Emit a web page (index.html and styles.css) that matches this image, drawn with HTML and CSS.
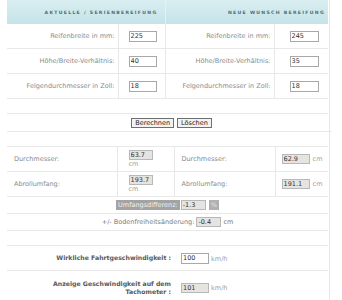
FILE: index.html
```html
<!DOCTYPE html>
<html>
	<head>
		<meta charset="utf-8">
		<title>Reifenrechner</title>
		<link rel="stylesheet" href="styles.css">
	</head>
	<body>
		<div class="wrap">
			<table class="sizes">
				<colgroup>
					<col class="c1"><col class="c2"><col class="c3"><col class="c4">
				</colgroup>
				<tr class="head">
					<th colspan="2" class="h-left">Aktuelle / Serienbereifung</th>
					<th colspan="2" class="h-right">Neue Wunsch Bereifung</th>
				</tr>
				<tr>
					<td class="lbl">Reifenbreite in mm:</td>
					<td class="inp"><input type="text" value="225"></td>
					<td class="lbl">Reifenbreite in mm:</td>
					<td class="inp inp-r"><input type="text" value="245"></td>
				</tr>
				<tr>
					<td class="lbl">Höhe/Breite-Verhältnis:</td>
					<td class="inp"><input type="text" value="40"></td>
					<td class="lbl">Höhe/Breite-Verhältnis:</td>
					<td class="inp inp-r"><input type="text" value="35"></td>
				</tr>
				<tr>
					<td class="lbl">Felgendurchmesser in Zoll:</td>
					<td class="inp"><input type="text" value="18"></td>
					<td class="lbl">Felgendurchmesser in Zoll:</td>
					<td class="inp inp-r"><input type="text" value="18"></td>
				</tr>
			</table>

			<div class="blank"></div>
			<div class="buttons">
				<button type="button">Berechnen</button>
				<button type="button">Löschen</button>
			</div>
			<div class="blank"></div>

			<table class="results">
				<colgroup>
					<col class="r1"><col class="r2"><col class="r3"><col class="r4">
				</colgroup>
				<tr>
					<td class="rl">Durchmesser:</td>
					<td class="ri"><input type="text" class="ro" value="63.7" readonly><span class="below">cm</span></td>
					<td class="rl">Durchmesser:</td>
					<td class="ri ri-r"><input type="text" class="ro" value="62.9" readonly> <span class="unit">cm</span></td>
				</tr>
				<tr>
					<td class="rl">Abrollumfang:</td>
					<td class="ri"><input type="text" class="ro" value="193.7" readonly><span class="below">cm</span></td>
					<td class="rl">Abrollumfang:</td>
					<td class="ri ri-r"><input type="text" class="ro" value="191.1" readonly> <span class="unit">cm</span></td>
				</tr>
			</table>

			<div class="line diff">
				<span class="mark">Umfangsdifferenz:</span><input type="text" class="ro small" value="-1.3" readonly><span class="mark pct">%</span>
			</div>
			<div class="line">
				+/- Bodenfreiheitsänderung: <input type="text" class="ro small" value="-0.4" readonly> <span class="unit">cm</span>
			</div>
			<div class="blank"></div>

			<table class="speed">
				<tr>
					<td class="sl">Wirkliche Fahrtgeschwindigkeit :</td>
					<td class="si"><input type="text" value="100"> <span class="unit">km/h</span></td>
				</tr>
				<tr class="tall">
					<td class="sl">Anzeige Geschwindigkeit auf dem<br>Tachometer :</td>
					<td class="si"><input type="text" class="ro" value="101" readonly> <span class="unit">km/h</span></td>
				</tr>
			</table>
		</div>
	</body>
</html>
```
FILE: styles.css
```css
body{
	margin: 0;
	background: #fff;
	font-family: "DejaVu Sans", Verdana, sans-serif;
	font-size: 6.5px;
	color: #8a8a8a;
}
.wrap{
	margin-left: 7px;
	width: 322px;
	min-height: 300px;
	border-right: 1px solid #e8e8e8;
}
table{
	border-collapse: collapse;
	table-layout: fixed;
	width: 321px;
}
td{
	padding: 0;
	border-bottom: 1px solid #e8e8e8;
}
input{
	box-sizing: border-box;
	width: 28px;
	height: 11px;
	padding: 0 1px;
	margin: 0;
	border: 1px solid #a8a8a8;
	font-family: "DejaVu Sans", Verdana, sans-serif;
	font-size: 6.5px;
	color: #333;
	background: #fff;
	vertical-align: middle;
}
input.ro{
	background: #e6e4e0;
	border-color: #b8b8b8;
	height: 10px;
}
.unit{
	vertical-align: middle;
}

/* kopf */
.sizes .c1{ width: 111px; }
.sizes .c2{ width: 47px; }
.sizes .c3{ width: 109px; }
.sizes .c4{ width: 54px; }
.head th{
	height: 24px;
	padding: 0;
	background: linear-gradient(#d9eef1, #c4e3e8);
	color: #4f6c72;
	font-size: 4.6px;
	font-weight: bold;
	letter-spacing: 1.3px;
	text-transform: uppercase;
	text-align: right;
}
.head .h-left{
	padding-right: 7px;
	border-right: 1px solid #e4f1f3;
}
.head .h-right{
	padding-right: 3px;
}
.sizes td{
	height: 24px;
}
.sizes .lbl{
	text-align: right;
	padding-right: 3px;
	border-right: 1px solid #e8e8e8;
}
.sizes .inp{
	padding-left: 10px;
	border-right: 1px solid #e8e8e8;
}
.sizes .inp-r{
	padding-left: 15px;
	border-right: 0;
}
.sizes .inp-r input{
	width: 29px;
}

.blank{
	height: 14px;
	width: 321px;
	border-bottom: 1px solid #e8e8e8;
}
.buttons{
	width: 321px;
	height: 17px;
	border-bottom: 1px solid #e8e8e8;
	display: flex;
	justify-content: center;
	align-items: center;
	gap: 3px;
	padding-left: 4px;
	box-sizing: content-box;
}
.buttons button{
	height: 10px;
	padding: 0 3px;
	font-family: "DejaVu Sans", Verdana, sans-serif;
	font-size: 6.5px;
	color: #222;
	background: #f2f2f2;
	border: 1px solid #707070;
	line-height: 8px;
}

/* ergebnisse */
.results .r1{ width: 110px; }
.results .r2{ width: 57px; }
.results .r3{ width: 101px; }
.results .r4{ width: 53px; }
.results td{
	height: 24px;
}
.results .rl{
	padding-left: 7px;
	border-right: 1px solid #e8e8e8;
}
.results .ri{
	padding-left: 11px;
	border-right: 1px solid #e8e8e8;
}
.results .ri input{
	width: 24px;
	display: block;
}
.results .ri .below{
	display: block;
	line-height: 8px;
	color: #a0a0a0;
}
.results .ri-r{
	padding-left: 6px;
	border-right: 0;
}
.results .ri-r input{
	width: 28px;
	display: inline-block;
}
.results .ri-r .unit{
	color: #a0a0a0;
	margin-left: 1px;
}

.line{
	width: 321px;
	height: 16px;
	border-bottom: 1px solid #e8e8e8;
	display: flex;
	justify-content: center;
	align-items: center;
	gap: 2px;
	color: #7a7a7a;
}
.line input{
	width: 25px;
}
.diff{
	gap: 1px;
}
.mark{
	background: #a3a3a3;
	color: #f0f0f0;
	padding: 0 2px;
	line-height: 10px;
}
.pct{
	background: #b0b0b0;
	color: #e0e0e0;
	margin-left: 2px;
}

/* geschwindigkeit */
.speed td{
	height: 24px;
}
.speed .sl{
	width: 164px;
	padding-right: 2px;
	text-align: right;
	font-weight: bold;
	color: #585858;
	font-size: 6.2px;
	line-height: 8px;
}
.speed .si{
	padding-left: 8px;
	color: #a0a0a0;
}
.speed .tall td{
	height: 34px;
	border-bottom: 0;
}
```
